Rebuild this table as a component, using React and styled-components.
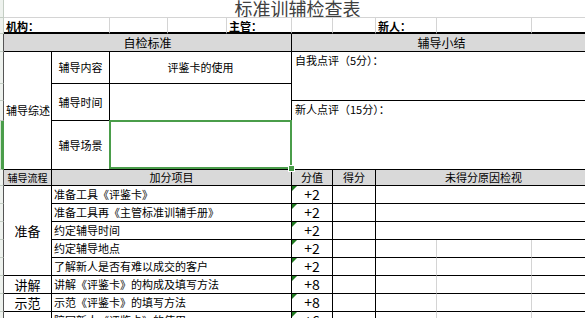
import React from 'react'
import styled, { createGlobalStyle } from 'styled-components'

const LINE = '#d4d4d4'
const INK = '#000'
const GREEN = '#4a9d4a'

const GlobalStyle = createGlobalStyle`
  html, body { margin: 0; padding: 0; background: #fff; }
  body { font-family: "Noto Sans CJK SC", "Noto Sans", sans-serif; overflow: hidden; }
`

const Viewport = styled.div`
  width: 585px;
  height: 318px;
  overflow: hidden;
`

const Sheet = styled.div`
  display: grid;
  grid-template-columns: 4px 48px 58px 58px 59px 65px 41px 43px 61px 95px 60px;
  grid-template-rows: 18px 16px 18px 32px 17px 20px 49px 16px repeat(8, 18px);
  width: 592px;
  color: #000;
`

const Cell = styled.div`
  grid-column: ${p => p.$col};
  grid-row: ${p => p.$row};
  box-sizing: border-box;
  position: relative;
  display: flex;
  align-items: ${p => (p.$top ? 'flex-start' : 'center')};
  justify-content: ${p => (p.$left ? 'flex-start' : 'center')};
  padding: ${p => (p.$top ? '1px 3px' : '0 2px')};
  border-right: 1px solid ${p => p.$rb || INK};
  border-bottom: ${p => p.$bw || 1}px solid ${p => p.$bb || INK};
  background: ${p => (p.$head ? '#d9d9d9' : '#fff')};
  font-size: ${p => p.$size || 11}px;
  font-weight: ${p => (p.$bold ? 700 : 400)};
  line-height: 15px;
  white-space: nowrap;
`

const RowHead = styled.div`
  grid-column: 1 / 2;
  grid-row: ${p => p.$row};
  box-sizing: border-box;
  background: ${p => (p.$active ? '#d6e8d6' : '#eef2ee')};
  border-bottom: 1px solid #c3cdc3;
  border-right: ${p => (p.$active ? `3px solid ${GREEN}` : `1px solid ${p.$edge || '#c3cdc3'}`)};
`

const Title = styled(Cell)`
  font-size: 18px;
  line-height: 16px;
  color: #404040;
  align-items: flex-start;
  overflow: hidden;
`

const InfoCell = styled(Cell)`
  line-height: 13px;
  padding-top: 2px;
`

const Score = styled(Cell)`
  font-size: 14px;
  line-height: 15px;
  &::before {
    content: '';
    position: absolute;
    left: 0;
    top: 0;
    border-style: solid;
    border-width: 5px 5px 0 0;
    border-color: #1f7a1f transparent transparent transparent;
  }
`

const Selection = styled.div`
  position: absolute;
  left: -1px;
  top: -1px;
  right: -1px;
  bottom: 0;
  border: 2px solid ${GREEN};
  z-index: 2;
  pointer-events: none;
  &::after {
    content: '';
    position: absolute;
    right: -5px;
    bottom: -5px;
    width: 5px;
    height: 5px;
    background: ${GREEN};
    border: 1px solid #fff;
  }
`

const steps = [
  { step: '准备', span: 5 },
  { step: '讲解', span: 1 },
  { step: '示范', span: 1 },
  { step: '', span: 1 },
]

const items = [
  { text: '准备工具《评鉴卡》', score: '+2' },
  { text: '准备工具再《主管标准训辅手册》', score: '+2' },
  { text: '约定辅导时间', score: '+2' },
  { text: '约定辅导地点', score: '+2' },
  { text: '了解新人是否有难以成交的客户', score: '+2' },
  { text: '讲解《评鉴卡》的构成及填写方法', score: '+8' },
  { text: '示范《评鉴卡》的填写方法', score: '+8' },
  { text: '陪同新人《评鉴卡》的使用', score: '+6' },
]

const App = () => {
  let stepRow = 9
  return (
    <Viewport>
      <GlobalStyle />
      <Sheet>
        {Array.from({ length: 16 }, (_, i) => (
          <RowHead key={i} $row={i + 1} $active={i + 1 === 7} $edge={i >= 2 ? '#555' : undefined} />
        ))}

        <Title $col="2 / 12" $row="1" $rb="transparent" $bb={LINE}>标准训辅检查表</Title>

        <InfoCell $col="2 / 4" $row="2" $left $bold $rb={LINE} $bw={2}>机构：</InfoCell>
        <InfoCell $col="4 / 5" $row="2" $rb={LINE} $bw={2} />
        <InfoCell $col="5 / 6" $row="2" $rb={LINE} $bw={2} />
        <InfoCell $col="6 / 7" $row="2" $left $bold $rb={LINE} $bw={2}>主管：</InfoCell>
        <InfoCell $col="7 / 8" $row="2" $rb={LINE} $bw={2} />
        <InfoCell $col="8 / 9" $row="2" $rb={LINE} $bw={2} />
        <InfoCell $col="9 / 10" $row="2" $left $bold $rb={LINE} $bw={2}>新人：</InfoCell>
        <InfoCell $col="10 / 11" $row="2" $rb={LINE} $bw={2} />
        <InfoCell $col="11 / 12" $row="2" $rb={LINE} $bw={2} />

        <Cell $col="2 / 7" $row="3" $head $size={12}>自检标准</Cell>
        <Cell $col="7 / 12" $row="3" $head $size={12}>辅导小结</Cell>

        <Cell $col="2 / 3" $row="4 / 8" $left>辅导综述</Cell>
        <Cell $col="3 / 4" $row="4">辅导内容</Cell>
        <Cell $col="4 / 7" $row="4">评鉴卡的使用</Cell>
        <Cell $col="3 / 4" $row="5 / 7">辅导时间</Cell>
        <Cell $col="4 / 7" $row="5 / 7" />
        <Cell $col="3 / 4" $row="7">辅导场景</Cell>
        <Cell $col="4 / 7" $row="7">
          <Selection />
        </Cell>
        <Cell $col="7 / 12" $row="4 / 6" $left $top>自我点评（5分）：</Cell>
        <Cell $col="7 / 12" $row="6 / 8" $left $top>新人点评（15分）：</Cell>

        <Cell $col="2 / 3" $row="8" $head $size={10}>辅导流程</Cell>
        <Cell $col="3 / 7" $row="8" $head>加分项目</Cell>
        <Cell $col="7 / 8" $row="8" $head>分值</Cell>
        <Cell $col="8 / 9" $row="8" $head>得分</Cell>
        <Cell $col="9 / 12" $row="8" $head>未得分原因检视</Cell>

        {steps.map(s => {
          const start = stepRow
          stepRow += s.span
          return (
            <Cell key={start} $col="2 / 3" $row={`${start} / ${start + s.span}`} $size={13}>
              {s.step}
            </Cell>
          )
        })}

        {items.map((it, i) => {
          const r = 9 + i
          return (
            <React.Fragment key={r}>
              <Cell $col="3 / 7" $row={r} $left>{it.text}</Cell>
              <Score $col="7 / 8" $row={r}>{it.score}</Score>
              <Cell $col="8 / 9" $row={r} />
              {i < 3 ? (
                <Cell $col="9 / 12" $row={r} />
              ) : (
                <>
                  <Cell $col="9 / 10" $row={r} $rb={LINE} />
                  <Cell $col="10 / 11" $row={r} $rb={LINE} />
                  <Cell $col="11 / 12" $row={r} />
                </>
              )}
            </React.Fragment>
          )
        })}
      </Sheet>
    </Viewport>
  )
}

export default App
